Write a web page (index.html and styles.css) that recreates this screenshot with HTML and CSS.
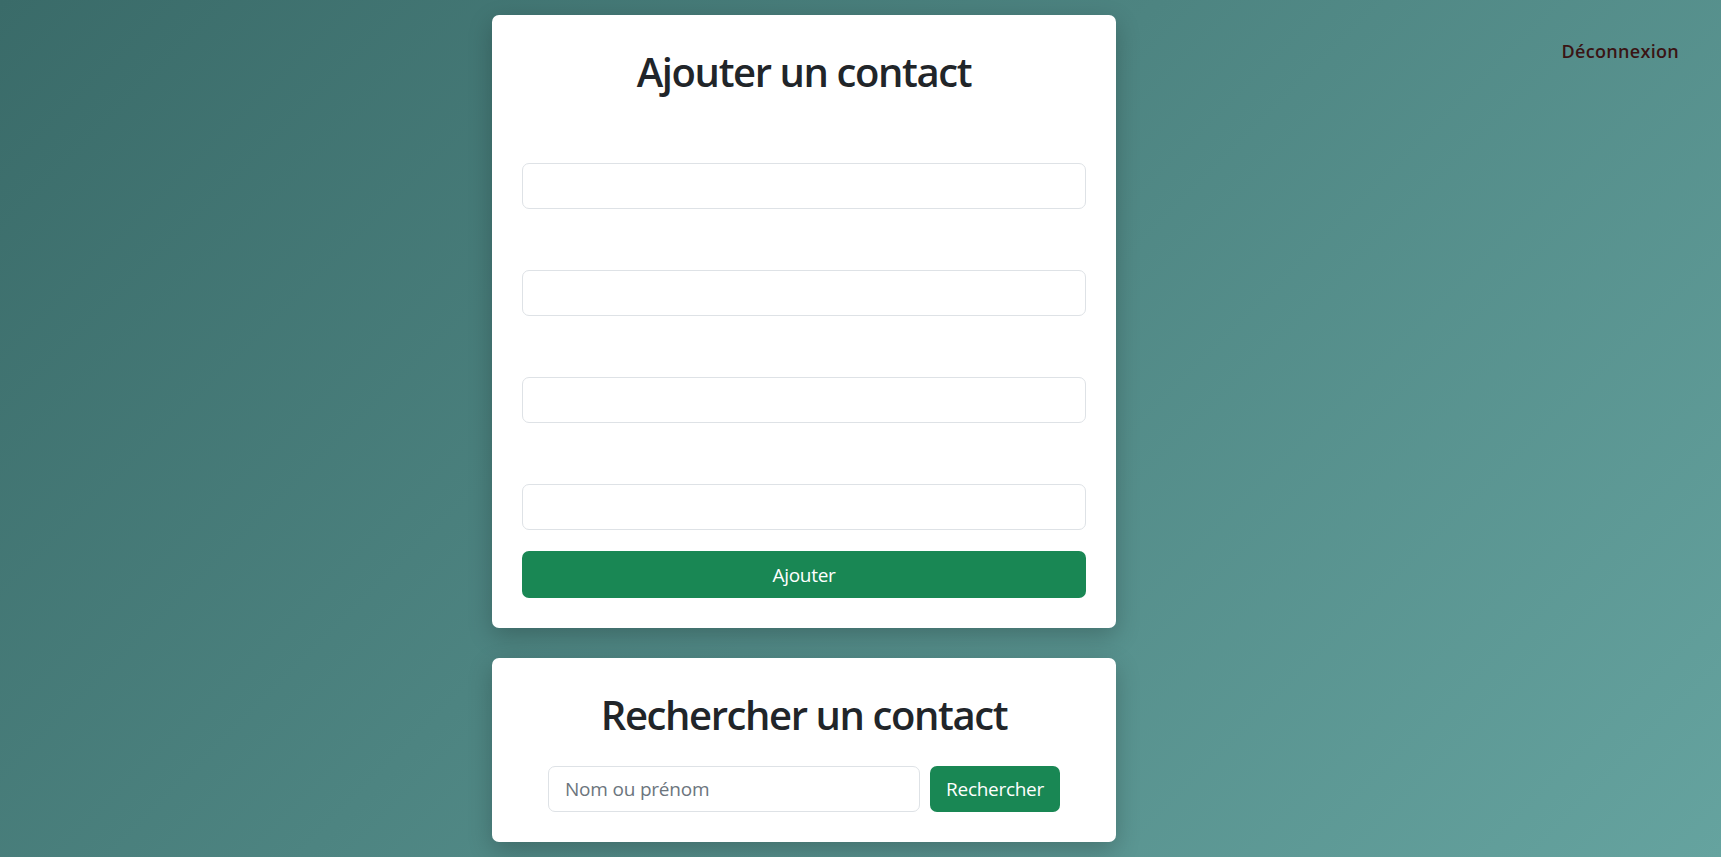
FILE: index.html
```html
<!DOCTYPE html>
<html lang="fr">
<head>
<meta charset="utf-8">
<title>Contacts</title>
<link rel="stylesheet" href="styles.css">
</head>
<body>
<div class="page">
  <main class="column">
    <section class="card">
      <h2 class="card-title">Ajouter un contact</h2>
      <form class="add-form">
        <div class="fields">
          <input class="field-input" type="text" aria-label="Nom">
          <input class="field-input" type="text" aria-label="Prénom">
          <input class="field-input" type="text" aria-label="Téléphone">
          <input class="field-input" type="text" aria-label="Email">
        </div>
        <button class="btn btn-block" type="button">Ajouter</button>
      </form>
    </section>
    <section class="card">
      <h2 class="card-title">Rechercher un contact</h2>
      <form class="search-row">
        <input class="field-input search-input" type="text" placeholder="Nom ou prénom">
        <button class="btn btn-search" type="button">Rechercher</button>
      </form>
    </section>
  </main>
  <nav class="topnav">
    <a class="logout" href="#">Déconnexion</a>
  </nav>
</div>
</body>
</html>
```
FILE: styles.css
```css
* { box-sizing: border-box; }
html, body { height: 100%; }
body {
  margin: 0;
  font-family: "Open Sans", "Noto Sans", sans-serif;
  color: #212529;
  background: linear-gradient(135deg, #3a6b69 0%, #4d8481 45%, #65a39f 100%);
  min-height: 100vh;
  overflow: hidden;
}
.page {
  display: flex;
  justify-content: space-between;
  align-items: flex-start;
  padding: 15px 42px 0 492px;
}
.column {
  width: 624px;
  display: flex;
  flex-direction: column;
  gap: 30px;
}
.card {
  background: #fff;
  border-radius: 7px;
  padding: 30px;
  box-shadow: 0 8px 24px rgba(0, 0, 0, 0.22);
}
.card-title {
  margin: 0;
  padding-top: 3px;
  text-align: center;
  font-size: 40px;
  line-height: 48px;
  font-weight: 600;
  letter-spacing: -1.4px;
  color: #212529;
}
.add-form {
  margin-top: 67px;
  display: flex;
  flex-direction: column;
  gap: 21px;
}
.fields {
  display: flex;
  flex-direction: column;
  gap: 61px;
}
.field-input {
  display: block;
  width: 100%;
  height: 46px;
  border: 1px solid #dee2e6;
  border-radius: 7px;
  padding: 0 16px;
  font-family: inherit;
  font-size: 19px;
  color: #212529;
  background: #fff;
  outline: none;
}
.field-input::placeholder { color: #6c757d; letter-spacing: -0.2px; }
.btn {
  border: none;
  border-radius: 7px;
  background: #198754;
  color: #fff;
  font-family: inherit;
  font-size: 19px;
  letter-spacing: -0.3px;
  cursor: pointer;
}
.btn-block {
  width: 100%;
  height: 47px;
}
.search-row {
  margin-top: 27px;
  display: flex;
  justify-content: center;
  gap: 10px;
}
.search-input { width: 372px; }
.btn-search {
  width: 130px;
  height: 46px;
}
.topnav {
  padding-top: 24px;
}
.logout {
  font-size: 18px;
  font-weight: 600;
  color: #3a1414;
  text-decoration: none;
  letter-spacing: 0.3px;
}
```
